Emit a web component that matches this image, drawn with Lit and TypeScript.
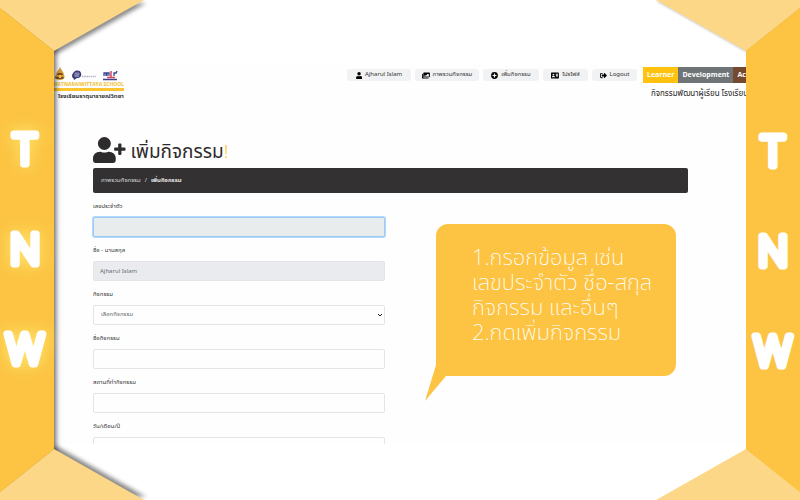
import { LitElement, html, svg, css } from "lit";
import { customElement, property } from "lit/decorators.js";

const glyphs: Record<string, { box: string; d: string }> = {
  user: { box: "0 0 448 512", d: "M224 256a128 128 0 1 0 0-256 128 128 0 1 0 0 256zm90 32h-17a174 174 0 0 1-146 0h-17A134 134 0 0 0 0 422v42a48 48 0 0 0 48 48h352a48 48 0 0 0 48-48v-42a134 134 0 0 0-134-134z" },
  images: { box: "0 0 576 512", d: "M480 416v16a48 48 0 0 1-48 48H48a48 48 0 0 1-48-48V176a48 48 0 0 1 48-48h16v208a80 80 0 0 0 80 80zM528 32a48 48 0 0 1 48 48v256a48 48 0 0 1-48 48H144a48 48 0 0 1-48-48V80a48 48 0 0 1 48-48zM160 320h352V208l-88-88-152 152-40-40-72 56z" },
  plus: { box: "0 0 512 512", d: "M256 8a248 248 0 1 0 0 496 248 248 0 1 0 0-496zm144 276H300v110h-88V300H112v-88h100V112h88v100h100z" },
  card: { box: "0 0 576 512", d: "M528 32H48A48 48 0 0 0 0 80v352a48 48 0 0 0 48 48h480a48 48 0 0 0 48-48V80a48 48 0 0 0-48-48zM176 128a64 64 0 1 1 0 128 64 64 0 1 1 0-128zm112 256H64v-40q0-56 60-56h104q60 0 60 56zm224-64H352v-40h160zm0-72H352v-40h160zm0-72H352v-40h160z" },
  logout: { box: "0 0 512 512", d: "M497 273 329 441c-15 15-41 5-41-17v-96H152a24 24 0 0 1-24-24v-96a24 24 0 0 1 24-24h136V88c0-21 26-32 41-17l168 168q14 17 0 34zM192 436v-40a12 12 0 0 0-12-12H96a32 32 0 0 1-32-32V160a32 32 0 0 1 32-32h84a12 12 0 0 0 12-12V76a12 12 0 0 0-12-12H96a96 96 0 0 0-96 96v192a96 96 0 0 0 96 96h84a12 12 0 0 0 12-12z" },
  userPlus: { box: "0 0 640 512", d: "M624 208h-64v-64a16 16 0 0 0-16-16h-32a16 16 0 0 0-16 16v64h-64a16 16 0 0 0-16 16v32a16 16 0 0 0 16 16h64v64a16 16 0 0 0 16 16h32a16 16 0 0 0 16-16v-64h64a16 16 0 0 0 16-16v-32a16 16 0 0 0-16-16zM224 256a128 128 0 1 0 0-256 128 128 0 1 0 0 256zm90 32h-17a174 174 0 0 1-146 0h-17A134 134 0 0 0 0 422v42a48 48 0 0 0 48 48h352a48 48 0 0 0 48-48v-42a134 134 0 0 0-134-134z" },
};

const icon = (name: string) => html`<svg class="icon" viewBox=${glyphs[name].box} aria-hidden="true">
  ${svg`<path fill="currentColor" fill-rule="evenodd" d=${glyphs[name].d}></path>`}
</svg>`;

@customElement("side-rail")
class SideRail extends LitElement {
  @property({ type: Boolean, reflect: true }) glow = false;

  static styles = css`
    :host {
      display: flex;
      flex-direction: column;
      align-items: center;
      background: #fcc442;
      padding-top: 118px;
      gap: 40px;
    }
    :host([glow]) {
      padding-top: 116px;
      padding-right: 4px;
      box-shadow: 2px 0 5px #0009;
      z-index: 1;
    }
    svg {
      width: 50px;
      height: 60px;
      overflow: visible;
      flex: none;
    }
    :host([glow]) svg {
      filter: drop-shadow(0 0 8px #ffe873);
    }
    text {
      font: 300 42px "Noto Sans", sans-serif;
      fill: #fff;
      stroke: #fff;
      stroke-width: 7px;
      stroke-linejoin: round;
      text-anchor: middle;
    }
  `;

  render() {
    return ["T", "N", "W"].map(
      (c) => html`<svg viewBox="0 0 50 60">${svg`<text x="25" y="48">${c}</text>`}</svg>`
    );
  }
}

@customElement("app-root")
class AppRoot extends LitElement {
  static styles = css`
    * {
      box-sizing: border-box;
    }
    :host {
      display: grid;
      grid-template-columns: 54px minmax(0, 1fr) 54px;
      position: relative;
      height: 100vh;
      overflow: hidden;
      background: #fff;
      color: #333;
      font: 6px/14px "Noto Sans Thai", "Open Sans", "Noto Sans", sans-serif;
    }
    a {
      color: inherit;
      text-decoration: none;
      white-space: nowrap;
    }
    .icon {
      display: block;
      height: 7px;
      flex: none;
    }
    .corner {
      position: absolute;
      z-index: 2;
      width: 160px;
      height: 60px;
      overflow: visible;
    }
    .flap { fill: #fdd788; }
    .edge { fill: #fcc442; }
    .tl { top: 0; left: 0; }
    .tr { top: 0; right: 0; transform: scaleX(-1); }
    .bl { bottom: 0; left: 0; transform: scaleY(-1); }
    .br { bottom: 0; right: 0; transform: scale(-1); }
    .tl .flap,
    .bl .flap { filter: drop-shadow(2px 3px 2px #0007); }
    .tr .flap { filter: drop-shadow(0 1px 1px #0003); }
    .screen {
      margin: 64px 0 56px;
      overflow: hidden;
      background: #fefefe;
    }
    header {
      display: flex;
      align-items: flex-start;
      gap: 6px;
      height: 68px;
      padding-top: 3px;
    }
    .brand {
      width: 70px;
      overflow: hidden;
      display: flex;
      flex-direction: column;
      align-items: flex-end;
      white-space: nowrap;
      font-weight: 700;
    }
    .marks {
      width: 70px;
      height: 14px;
    }
    .school {
      color: #efbd2a;
      font: 700 5px/7px "Open Sans", sans-serif;
    }
    .bar {
      width: 100%;
      height: 3px;
      background: #fcc42c;
    }
    .thai {
      line-height: 11px;
    }
    .links {
      display: flex;
      gap: 4px;
      margin: 2px 0 0 auto;
    }
    .pill {
      display: flex;
      align-items: center;
      justify-content: center;
      gap: 3px;
      height: 12px;
      border-radius: 3px;
      background: #f1f2f4;
      line-height: 12px;
    }
    .pill .icon {
      color: #000;
    }
    .w64 { width: 64px; }
    .w56 { width: 56px; }
    .w45 { width: 45px; }
    .aside {
      width: 103px;
      overflow: hidden;
      white-space: nowrap;
    }
    .tabs {
      display: flex;
      height: 16px;
      font: 700 7px/16px "Open Sans", sans-serif;
      color: #fff;
    }
    .tabs a {
      padding: 0 4px;
      flex: none;
    }
    .learner { background: #ffc20e; }
    .dev { background: #6f7577; }
    .act { background: #754830; }
    .aside p {
      margin: 4px 0 0 8px;
      font-size: 8px;
      color: #222;
    }
    main {
      padding: 0 58px 0 39px;
    }
    h1 {
      display: flex;
      align-items: center;
      gap: 5px;
      height: 36px;
      margin: 0;
      font-size: 19px;
      font-weight: 400;
      line-height: 28px;
      color: #2e2b2c;
      white-space: nowrap;
    }
    h1 .icon {
      height: 26px;
    }
    .title {
      padding-top: 6px;
    }
    .bang {
      color: #fcc42c;
      font-weight: 300;
    }
    .crumbs {
      display: flex;
      align-items: center;
      gap: 4px;
      height: 25px;
      padding: 0 8px;
      border-radius: 2px;
      background: #343132;
      color: #ddd;
    }
    .crumbs b {
      color: #fff;
      font-weight: 600;
    }
    form {
      display: flex;
      flex-direction: column;
      gap: 7px;
      width: 49%;
      min-width: 200px;
      margin-top: 7px;
    }
    .field {
      display: flex;
      flex-direction: column;
      gap: 3px;
    }
    label {
      height: 14px;
    }
    input,
    select {
      appearance: none;
      width: 100%;
      height: 20px;
      margin: 0;
      padding: 0 6px;
      border: 1px solid #e3e5e7;
      border-radius: 2px;
      background: #fefefe;
      color: #666b70;
      font: inherit;
      outline: none;
    }
    select {
      padding: 0 7px;
    }
    input[readonly] {
      background: #e9ebef;
    }
    input.focus {
      background: #e9ecec;
      border-color: #9dcbf8;
      box-shadow: 0 0 0 1px #b4d8fc;
    }
    .pick {
      display: flex;
      position: relative;
    }
    .chev {
      position: absolute;
      right: 2px;
      top: 7px;
      width: 6px;
      height: 6px;
      fill: none;
      stroke: #222;
    }
    .bubble {
      position: absolute;
      z-index: 3;
      left: 436px;
      top: 224px;
      width: 240px;
      height: 152px;
      padding: 22px 0 0 36px;
      border-radius: 12px;
      background: #fcc442;
      color: #fff;
      font-size: 22px;
      font-weight: 200;
      line-height: 25px;
      white-space: nowrap;
    }
    .bubble p { margin: 0; }
    .tail {
      position: absolute;
      left: -12px;
      bottom: -25px;
      width: 24px;
      height: 40px;
      fill: #fcc442;
    }
  `;

  private corner(pos: string) {
    return html`<svg class="corner ${pos}" viewBox="0 0 160 60" aria-hidden="true">
      <path class="flap" d="M0 0H144L54 51L0 8Z"></path>
      <path class="edge" d="M0 8L54 51V60H0Z"></path>
    </svg>`;
  }

  private text(id: string, label: string, value = "", state = "") {
    return html`<div class="field">
      <label for=${id}>${label}</label>
      <input id=${id} class=${state} .value=${value} ?readonly=${state !== ""} />
    </div>`;
  }

  render() {
    return html`
      <side-rail glow></side-rail>
      <div class="screen">
        <header>
          <div class="brand">
            <svg class="marks" viewBox="0 0 70 14" aria-hidden="true">
              <path fill="#d79b32" d="M6 0c1 3 4 5 4 8 2 3-1 5-4 5s-7-2-4-5c0-3 3-5 4-8z"></path>
              <path fill="#814d22" d="M4 6h4l1 2H3zM1 10h9l-1 2H2z"></path>
              <path fill="#f2c55a" d="M5 8h2v3H5z"></path>
              <path fill="#3c3d78" d="M20 5c2-2 6-2 7 1 1 3-1 5-4 5l-3 2c0-2-2-2-2-4 0-2 1-3 2-4z"></path>
              <path stroke="#c9cbe6" stroke-width=".6" fill="none" d="M20 7h6M20 9h5M22 5v5M24 5v5"></path>
              <path stroke="#b9b6c9" stroke-width="1.6" stroke-dasharray="1.6 .6" d="M28 9.500h14"></path>
              <path stroke="#3a438f" stroke-width="1.300" fill="none" d="M50 9V6h2v3M53 9V6h2v3M60 9V6h2l1-2M49 12.500h14"></path>
              <path stroke="#d84657" stroke-width="1.500" fill="none" d="M57 4v6M53 10.500h8"></path>
            </svg>
            <span class="school">THATNARAIWITTAYA SCHOOL</span>
            <span class="bar"></span>
            <span class="thai">โรงเรียนธาตุนารายณ์วิทยา</span>
          </div>
          <nav class="links">
            <a class="pill w64" href="#">${icon("user")}Ajharul Islam</a>
            <a class="pill w64" href="#">${icon("images")}ภาพรวมกิจกรรม</a>
            <a class="pill w56" href="#">${icon("plus")}เพิ่มกิจกรรม</a>
            <a class="pill w45" href="#">${icon("card")}โปรไฟล์</a>
            <a class="pill w45" href="#">${icon("logout")}Logout</a>
          </nav>
          <div class="aside">
            <nav class="tabs">
              <a class="learner" href="#">Learner</a>
              <a class="dev" href="#">Development</a>
              <a class="act" href="#">Activities</a>
            </nav>
            <p>กิจกรรมพัฒนาผู้เรียน โรงเรียน</p>
          </div>
        </header>
        <main>
          <h1>${icon("userPlus")}<span class="title">เพิ่มกิจกรรม<span class="bang">!</span></span></h1>
          <nav class="crumbs"><a href="#">ภาพรวมกิจกรรม</a><span>/</span><b>เพิ่มกิจกรรม</b></nav>
          <form>
            ${this.text("code", "เลขประจำตัว", "", "focus")}
            ${this.text("name", "ชื่อ - นามสกุล", "Ajharul Islam", "locked")}
            <div class="field">
              <label for="kind">กิจกรรม</label>
              <div class="pick">
                <select id="kind"><option>เลือกกิจกรรม</option></select>
                <svg class="chev" viewBox="0 0 6 6" aria-hidden="true"><path d="M1 2l2 2 2-2"></path></svg>
              </div>
            </div>
            ${this.text("title", "ชื่อกิจกรรม")}
            ${this.text("place", "สถานที่ทำกิจกรรม")}
            ${this.text("date", "วัน/เดือน/ปี", "วว/ดด/ปปปป")}
          </form>
        </main>
      </div>
      <side-rail></side-rail>
      ${["tl", "tr", "bl", "br"].map((p) => this.corner(p))}
      <aside class="bubble">
        <svg class="tail" viewBox="0 0 24 40" aria-hidden="true"><path d="M12 4L1 40L22 15V4Z"></path></svg>
        <p>1.กรอกข้อมูล เช่น</p>
        <p>เลขประจำตัว ชื่อ-สกุล</p>
        <p>กิจกรรม และอื่นๆ</p>
        <p>2.กดเพิ่มกิจกรรม</p>
      </aside>
    `;
  }
}
